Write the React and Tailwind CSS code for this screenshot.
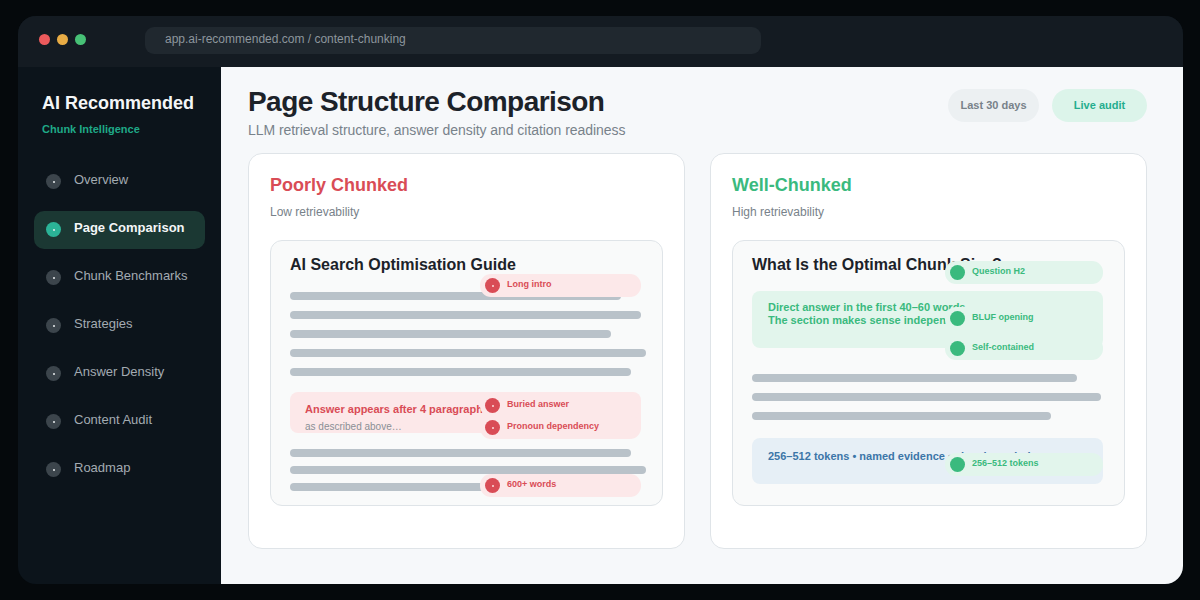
const navItems = ['Overview', 'Page Comparison', 'Chunk Benchmarks', 'Strategies', 'Answer Density', 'Content Audit', 'Roadmap'];

function NavItem({ label, active }) {
  return (
    <div className={`relative flex h-[38px] items-start gap-[13px] rounded-[10px] pl-[12px] ${active ? 'bg-[#1b3833]' : ''}`}>
      <span className={`mt-[11px] flex h-[15px] w-[15px] shrink-0 items-center justify-center rounded-full ${active ? 'bg-[#2bb397]' : 'bg-[#3c454c]'}`}>
        <span className="h-[2px] w-[2px] rounded-full bg-[#e8ecee]" />
      </span>
      <span className={`mt-[8px] text-[13px] leading-[18px] ${active ? 'font-bold text-[#f4f6f7]' : 'text-[#a3abb2]'}`}>{label}</span>
    </div>
  );
}

function Line({ width }) {
  return <div className="h-2 rounded-full bg-[#b9c2c9]" style={{ width }} />;
}

// annotation pill that sits over the mock page
function Pill({ label, className, good }) {
  return (
    <div className={`absolute flex h-[23px] items-start rounded-[11px] pl-[5px] ${good ? 'left-[212px] w-[158px] bg-[#e2f5ec] text-[#3aba7e]' : 'left-[209px] w-[161px] bg-[#fce8e9] text-[#d94c56]'} ${className}`}>
      <span className={`mt-[4px] flex h-[15px] w-[15px] shrink-0 items-center justify-center rounded-full ${good ? 'bg-[#3aba7e]' : 'bg-[#d94c56]'}`}>
        {!good && <span className="h-[2px] w-[2px] rounded-full bg-[#fbdcdd]" />}
      </span>
      <span className="ml-[7px] mt-[4px] text-[9px] font-bold leading-[12px]">{label}</span>
    </div>
  );
}

function PoorCard() {
  return (
    <section className="flex h-[396px] w-[437px] flex-col rounded-[14px] border border-[#dfe4e8] bg-white px-[21px] pt-[20px]">
      <h2 className="text-[18px] font-bold leading-[22px] text-[#d94c56]">Poorly Chunked</h2>
      <p className="mt-[8px] text-[12px] leading-[16px] text-[#78828a]">Low retrievability</p>
      <div className="relative mt-[20px] h-[266px] w-[393px] rounded-[12px] border border-[#dfe4e8] bg-[#f9fafa] pl-[19px] pt-[14px]">
        <h3 className="text-[16px] font-bold leading-[20px] text-[#1c2229]">AI Search Optimisation Guide</h3>
        <div className="mt-[17px] flex flex-col gap-[11px]">
          <Line width={331} />
          <Line width={351} />
          <Line width={321} />
          <Line width={356} />
          <Line width={341} />
        </div>
        <div className="mt-[16px] h-[41px] w-[351px] rounded-[8px] bg-[#fce8e9] pl-[15px] pt-[10px]">
          <p className="text-[11px] font-bold leading-[14px] text-[#d94c56]">Answer appears after 4 paragraphs</p>
          <p className="text-[10px] leading-[21px] text-[#8a8f95]">as described above…</p>
        </div>
        <div className="mt-[16px] flex flex-col gap-[9px]">
          <Line width={341} />
          <Line width={356} />
          <Line width={300} />
        </div>
        <Pill label="Long intro" className="top-[33px]" />
        <Pill label="Buried answer" className="top-[153px]" />
        <Pill label="Pronoun dependency" className="top-[175px]" />
        <Pill label="600+ words" className="top-[233px]" />
      </div>
    </section>
  );
}

function GoodCard() {
  return (
    <section className="flex h-[396px] w-[437px] flex-col rounded-[14px] border border-[#dfe4e8] bg-white px-[21px] pt-[20px]">
      <h2 className="text-[18px] font-bold leading-[22px] text-[#3aba7e]">Well-Chunked</h2>
      <p className="mt-[8px] text-[12px] leading-[16px] text-[#78828a]">High retrievability</p>
      <div className="relative mt-[20px] h-[266px] w-[393px] rounded-[12px] border border-[#dfe4e8] bg-[#f9fafa] pl-[19px] pt-[14px]">
        <h3 className="text-[16px] font-bold leading-[20px] text-[#1c2229]">What Is the Optimal Chunk Size?</h3>
        <div className="mt-[16px] h-[57px] w-[351px] rounded-[8px] bg-[#e2f5ec] pl-[16px] pt-[10px] text-[11px] font-bold leading-[13px] text-[#3aba7e]">
          <p>Direct answer in the first 40–60 words.</p>
          <p>The section makes sense independently.</p>
        </div>
        <div className="mt-[26px] flex flex-col gap-[11px]">
          <Line width={325} />
          <Line width={349} />
          <Line width={299} />
        </div>
        <div className="mt-[18px] h-[46px] w-[351px] rounded-[8px] bg-[#e6eff6] pl-[16px] pt-[11px]">
          <p className="text-[11px] font-bold leading-[14px] text-[#3c76a8]">256–512 tokens • named evidence • clear boundaries</p>
        </div>
        <Pill good label="Question H2" className="top-[20px]" />
        <Pill good label="BLUF opening" className="top-[66px]" />
        <Pill good label="Self-contained" className="top-[96px]" />
        <Pill good label="256–512 tokens" className="top-[212px]" />
      </div>
    </section>
  );
}

export default function App() {
  return (
    <div className="h-[600px] w-[1200px] overflow-hidden bg-[#05090c] pl-[18px] pr-[17px] pt-[16px] font-['Liberation_Sans',Arial,sans-serif]">
      <div className="flex h-[568px] flex-col overflow-hidden rounded-[18px] bg-[#0c141b]">
        <div className="flex h-[51px] shrink-0 items-center bg-[#141b22] pb-[2px] pl-[21px]">
          <div className="mb-[2px] flex gap-[7px]">
            <span className="h-[11px] w-[11px] rounded-full bg-[#ec5a5c]" />
            <span className="h-[11px] w-[11px] rounded-full bg-[#e8ac45]" />
            <span className="h-[11px] w-[11px] rounded-full bg-[#47c176]" />
          </div>
          <div className="ml-[59px] flex h-[27px] w-[616px] items-center rounded-[9px] bg-[#20282f] pb-[4px] pl-[20px] text-[12px] text-[#8d969d]">
            app.ai-recommended.com / content-chunking
          </div>
        </div>
        <div className="flex min-h-0 flex-1">
          <aside className="w-[203px] shrink-0 px-[16px]">
            <div className="pl-[8px] pt-[25px]">
              <div className="text-[18px] font-bold leading-[22px] text-[#f4f6f7]">AI Recommended</div>
              <div className="mt-[8px] text-[11px] font-bold leading-[14px] text-[#1fa987]">Chunk Intelligence</div>
            </div>
            <nav className="mt-[27px] flex flex-col gap-[10px]">
              {navItems.map(item => <NavItem key={item} label={item} active={item === 'Page Comparison'} />)}
            </nav>
          </aside>
          <main className="min-w-0 flex-1 bg-[#f6f8fa] pl-[27px] pr-[36px] pt-[17px]">
            <header className="flex h-[69px] items-start justify-between">
              <div>
                <h1 className="text-[28px] font-bold leading-[36px] tracking-[-0.56px] text-[#1c2229]">Page Structure Comparison</h1>
                <p className="mt-[1px] text-[14px] leading-[18px] tracking-[-0.05px] text-[#78828a]">LLM retrieval structure, answer density and citation readiness</p>
              </div>
              <div className="mt-[5px] flex gap-[13px]">
                <span className="flex h-[33px] w-[91px] items-center justify-center rounded-full bg-[#ecf0f2] text-[11px] font-bold text-[#78828a]">Last 30 days</span>
                <span className="flex h-[33px] w-[95px] items-center justify-center rounded-full bg-[#dcf4ea] text-[11px] font-bold text-[#25ad8e]">Live audit</span>
              </div>
            </header>
            <div className="flex gap-[25px]">
              <PoorCard />
              <GoodCard />
            </div>
          </main>
        </div>
      </div>
    </div>
  );
}
